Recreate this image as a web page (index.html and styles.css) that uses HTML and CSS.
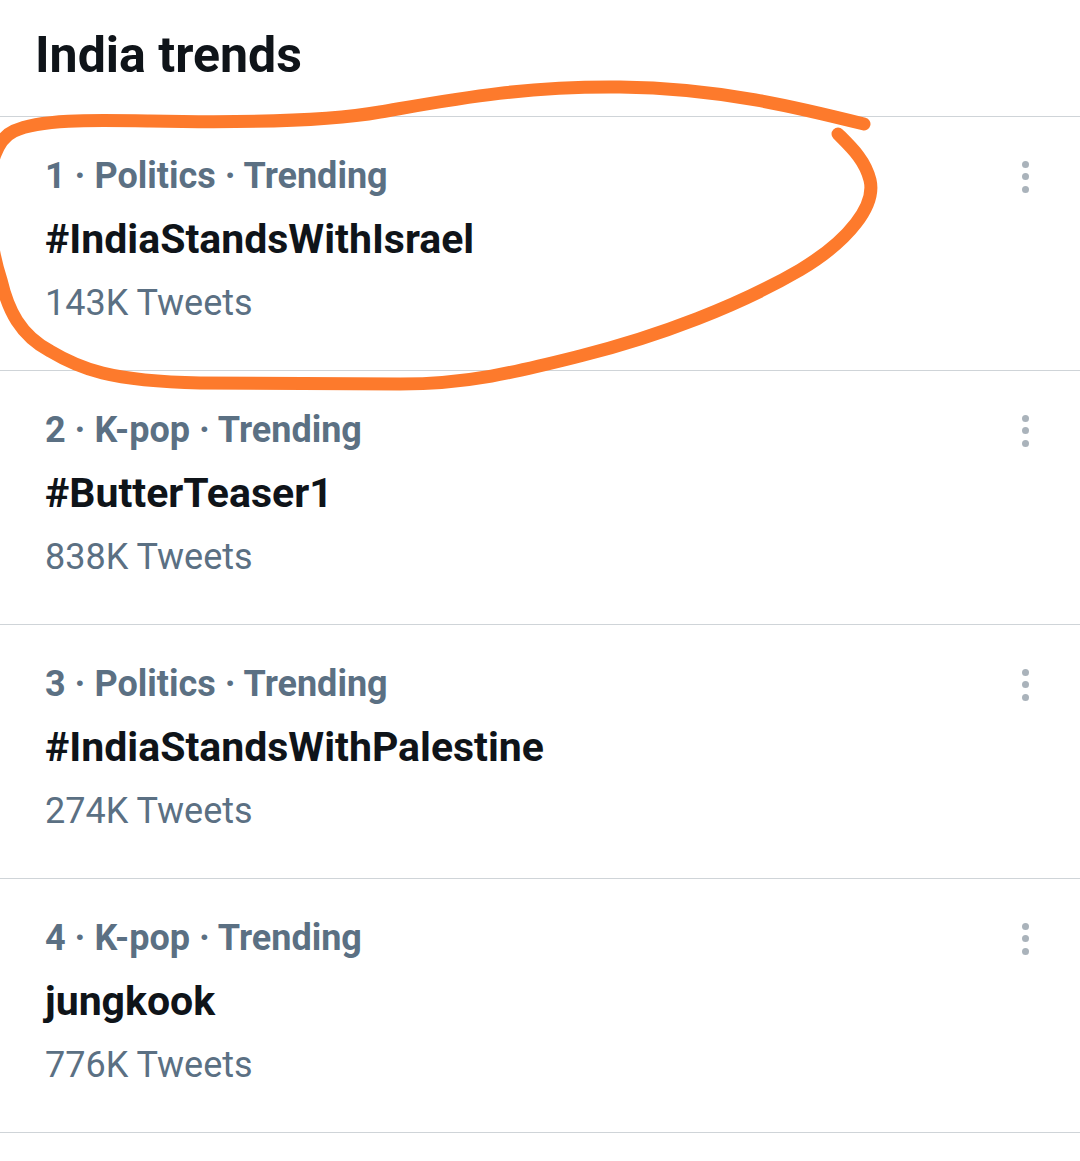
FILE: index.html
```html
<!DOCTYPE html>
<html lang="en">
<head>
<meta charset="utf-8">
<title>India trends</title>
<link rel="stylesheet" href="styles.css">
</head>
<body>
<div class="page">
  <header class="header">
    <h1 class="title">India trends</h1>
  </header>
  <ul class="trends">
    <li class="trend">
      <div class="trend-body">
        <div class="meta">1 · Politics · Trending</div>
        <div class="tag">#IndiaStandsWithIsrael</div>
        <div class="count">143K Tweets</div>
      </div>
      <div class="more"><span></span><span></span><span></span></div>
    </li>
    <li class="trend">
      <div class="trend-body">
        <div class="meta">2 · K-pop · Trending</div>
        <div class="tag">#ButterTeaser1</div>
        <div class="count">838K Tweets</div>
      </div>
      <div class="more"><span></span><span></span><span></span></div>
    </li>
    <li class="trend">
      <div class="trend-body">
        <div class="meta">3 · Politics · Trending</div>
        <div class="tag">#IndiaStandsWithPalestine</div>
        <div class="count">274K Tweets</div>
      </div>
      <div class="more"><span></span><span></span><span></span></div>
    </li>
    <li class="trend">
      <div class="trend-body">
        <div class="meta">4 · K-pop · Trending</div>
        <div class="tag">jungkook</div>
        <div class="count">776K Tweets</div>
      </div>
      <div class="more"><span></span><span></span><span></span></div>
    </li>
  </ul>
  <svg class="scribble" width="1080" height="1161" viewBox="0 0 1080 1161" aria-hidden="true">
    <path d="M 864 124
             C 800 108, 720 88, 620 87
             C 520 86, 450 100, 380 112
             C 330 121, 250 123, 150 121
             C 90 120, 40 119, 14 131
             C -22 148, -14 235, 1 280
             C 8 310, 20 335, 50 351
             C 80 369, 110 381, 200 383
             L 400 384
             C 470 384, 520 371, 580 356
             C 660 336, 740 305, 800 270
             C 850 240, 876 205, 870 180
             C 865 160, 852 148, 838 134"/>
  </svg>
</div>
</body>
</html>
```

FILE: styles.css
```css
html, body {
  margin: 0;
  padding: 0;
  background: #ffffff;
}

.page {
  position: relative;
  width: 1080px;
  min-height: 1161px;
  font-family: Roboto, "Liberation Sans", Arial, sans-serif;
  overflow: hidden;
}

.header {
  height: 117px;
  box-sizing: border-box;
  padding: 23px 0 0 35px;
  border-bottom: 1px solid #cfd4d8;
}

.title {
  margin: 0;
  font-size: 50px;
  line-height: 64px;
  font-weight: 700;
  color: #0f1419;
}

.trends {
  list-style: none;
  margin: 0;
  padding: 0;
}

.trend {
  display: flex;
  align-items: flex-start;
  padding: 35px 51px 43px 45px;
  border-bottom: 1px solid #cfd4d8;
}

.trend-body {
  flex: 1;
  display: flex;
  flex-direction: column;
}

.meta {
  font-size: 36px;
  line-height: 48px;
  font-weight: 700;
  color: #5b7083;
}

.tag {
  margin-top: 13px;
  font-size: 41px;
  line-height: 52px;
  font-weight: 700;
  color: #0f1419;
}

.count {
  margin-top: 14px;
  font-size: 36px;
  line-height: 48px;
  font-weight: 400;
  color: #5b7083;
}

.more {
  display: flex;
  flex-direction: column;
  gap: 5.7px;
  margin-top: 8.5px;
}

.more span {
  display: block;
  width: 7px;
  height: 7px;
  border-radius: 50%;
  background: #aab3bb;
}

.scribble {
  position: absolute;
  left: 0;
  top: 0;
  pointer-events: none;
}

.scribble path {
  fill: none;
  stroke: #fd7a2c;
  stroke-width: 13;
  stroke-linecap: round;
  stroke-linejoin: round;
}
```
